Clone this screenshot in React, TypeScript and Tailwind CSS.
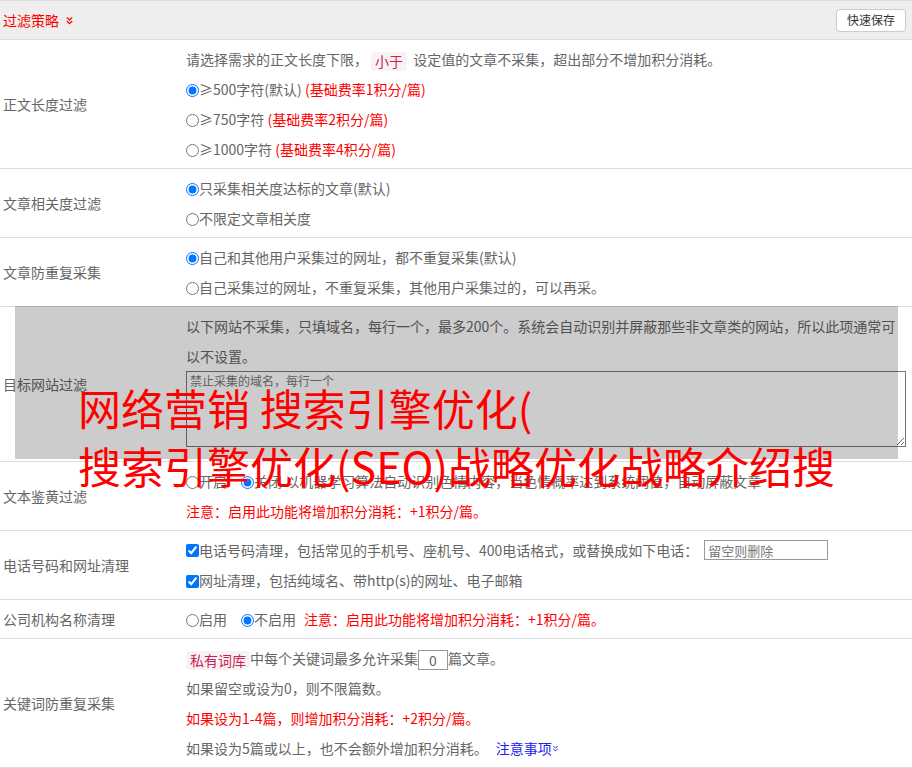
import type { ReactNode } from 'react';

function DoubleChevron({ className }: { className?: string }) {
  return (
    <svg viewBox="0 0 10 10" className={className} fill="none" stroke="currentColor" strokeWidth="1.4">
      <polyline points="2,1.5 5,4.5 8,1.5" />
      <polyline points="2,5.5 5,8.5 8,5.5" />
    </svg>
  );
}

function Tag({ children }: { children: ReactNode }) {
  return (
    <span className="inline-block rounded-[4px] bg-[#f9f2f4] px-[4px] align-middle leading-[19px] text-[#c7254e]">
      {children}
    </span>
  );
}

function Row({
  label,
  children,
  className = '',
}: {
  label: string;
  children: ReactNode;
  className?: string;
}) {
  return (
    <div className={`relative flex border-b border-[#ddd] ${className}`}>
      <div className="flex w-[186px] shrink-0 items-center pl-[3px] text-[14px] text-[#666]">
        {label}
      </div>
      <div className="flex-1 py-[4px] pr-[6px] text-[14px] leading-[30px] text-[#666]">
        {children}
      </div>
    </div>
  );
}

function Radio({ name, checked }: { name: string; checked?: boolean }) {
  return (
    <input
      type="radio"
      name={name}
      defaultChecked={checked}
      className="m-0 h-[13px] w-[13px] align-[-2px]"
    />
  );
}

function Check() {
  return (
    <input type="checkbox" defaultChecked className="m-0 h-[13px] w-[13px] align-[-2px]" />
  );
}

export default function App() {
  return (
    <div className="relative min-h-screen w-full overflow-hidden bg-white font-[family-name:'Noto_Sans_CJK_SC',sans-serif]">
      {/* Header */}
      <div className="flex h-[40px] items-center justify-between border-y border-[#ddd] bg-[#eee] pl-[3px] pr-[6px]">
        <div className="flex items-center gap-[6px] text-[14px] text-[#f00]">
          过滤策略
          <DoubleChevron className="h-[9px] w-[9px]" />
        </div>
        <button
          type="button"
          className="h-[23px] rounded-[4px] border border-[#ccc] bg-white px-[10px] text-[12px] text-[#333]"
        >
          快速保存
        </button>
      </div>

      <Row label="正文长度过滤">
        <div className="whitespace-nowrap">
          请选择需求的正文长度下限，<span className="mx-[3px]"><Tag>小于</Tag></span> 设定值的文章不采集，超出部分不增加积分消耗。
        </div>
        <div>
          <Radio name="len" checked />≥500字符(默认) <span className="text-[#f00]">(基础费率1积分/篇)</span>
        </div>
        <div>
          <Radio name="len" />≥750字符 <span className="text-[#f00]">(基础费率2积分/篇)</span>
        </div>
        <div>
          <Radio name="len" />≥1000字符 <span className="text-[#f00]">(基础费率4积分/篇)</span>
        </div>
      </Row>

      <Row label="文章相关度过滤">
        <div>
          <Radio name="rel" checked />只采集相关度达标的文章(默认)
        </div>
        <div>
          <Radio name="rel" />不限定文章相关度
        </div>
      </Row>

      <Row label="文章防重复采集">
        <div>
          <Radio name="dup" checked />自己和其他用户采集过的网址，都不重复采集(默认)
        </div>
        <div>
          <Radio name="dup" />自己采集过的网址，不重复采集，其他用户采集过的，可以再采。
        </div>
      </Row>

      <Row label="目标网站过滤">
        <div className="whitespace-nowrap">
          以下网站不采集，只填域名，每行一个，最多200个。系统会自动识别并屏蔽那些非文章类的网站，所以此项通常可
        </div>
        <div>以不设置。</div>
        <textarea
          placeholder="禁止采集的域名，每行一个"
          className="mb-[10px] block h-[76px] w-full border border-[#777] bg-white px-[3px] py-0 text-[12px] leading-[18px] text-[#666] placeholder:text-[#777]"
        />
        {/* grey mask laid over the row */}
        <div className="pointer-events-none absolute bottom-[2px] left-[15px] top-[-1px] w-[883px] bg-black/20" />
      </Row>

      <Row label="文本鉴黄过滤">
        <div className="whitespace-nowrap">
          <Radio name="porn" />开启<span className="ml-[14px]" />
          <Radio name="porn" checked />关闭 以机器学习算法自动识别色情内容，当色情概率达到系统阈值，自动屏蔽文章
        </div>
        <div className="text-[#f00]">注意：启用此功能将增加积分消耗：+1积分/篇。</div>
      </Row>

      <Row label="电话号码和网址清理">
        <div className="flex items-center whitespace-nowrap">
          <Check />
          电话号码清理，包括常见的手机号、座机号、400电话格式，或替换成如下电话：
          <input
            placeholder="留空则删除"
            className="ml-[6px] h-[20px] w-[124px] border border-[#999] px-[3px] text-[13px] leading-[18px] placeholder:text-[#777]"
          />
        </div>
        <div>
          <Check />网址清理，包括纯域名、带http(s)的网址、电子邮箱
        </div>
      </Row>

      <Row label="公司机构名称清理">
        <div className="whitespace-nowrap">
          <Radio name="org" />启用<span className="ml-[14px]" />
          <Radio name="org" checked />不启用
          <span className="ml-[8px] text-[#f00]">注意：启用此功能将增加积分消耗：+1积分/篇。</span>
        </div>
      </Row>

      <Row label="关键词防重复采集">
        <div className="whitespace-nowrap">
          <Tag>私有词库</Tag>
          中每个关键词最多允许采集
          <input
            defaultValue="0"
            className="h-[20px] w-[30px] border border-[#999] text-center align-middle text-[14px] leading-[18px] text-[#666]"
          />
          篇文章。
        </div>
        <div>如果留空或设为0，则不限篇数。</div>
        <div className="text-[#f00]">如果设为1-4篇，则增加积分消耗：+2积分/篇。</div>
        <div className="flex items-center">
          如果设为5篇或以上，也不会额外增加积分消耗。
          <span className="ml-[8px] flex items-center text-[#22e]">
            注意事项
            <DoubleChevron className="h-[7px] w-[7px]" />
          </span>
        </div>
      </Row>

      {/* watermark headline laid over the page */}
      <div className="pointer-events-none absolute left-[78px] top-[378px] whitespace-nowrap text-[43px] leading-[58px] text-[#f00]">
        网络营销 搜索引擎优化(
        <br />
        搜索引擎优化(SEO)战略优化战略介绍搜
      </div>
    </div>
  );
}
